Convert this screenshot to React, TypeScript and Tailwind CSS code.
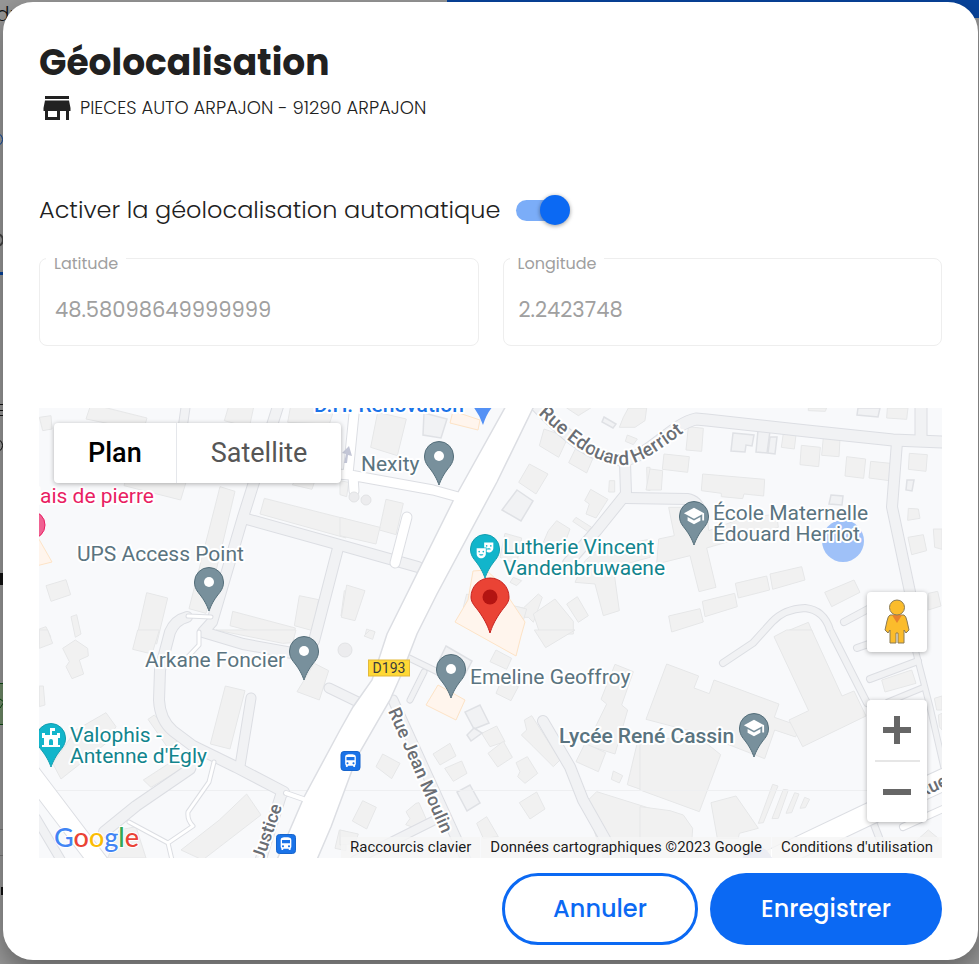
import { useState } from "react";
import type { ReactNode } from "react";
import { MdDirectionsBus, MdSchool, MdTheaterComedy } from "react-icons/md";

/* Buildings are stored per survey sheet, three units to one map pixel. */
const sheets = [
  {
    at: "translate(36 404) scale(0.33333)",
    buildings: [
      "10,40 45,35 48,75 20,80", "165,0 333,42 322,80 150,45", "580,0 655,0 640,70 565,50", "765,0 900,0 880,60 755,55",
      "270,225 450,235 434,288 264,245", "552,248 597,262 510,628 459,614", "685,283 930,345 930,402 672,330", "775,235 835,235 828,256 768,242",
      "30,545 90,527 104,572 45,592", "332,566 395,582 362,720 302,700", "790,575 848,587 830,680 775,665", "590,622 778,672 770,715 582,665",
      "105,638 122,632 135,690 118,700", "10,675 30,668 45,700 10,720", "925,560 940,565 930,640 915,636",
    ],
  },
  {
    at: "translate(340 404) scale(0.33333)",
    buildings: [
      "113,25 199,45 172,155 92,130", "0,230 26,235 20,278 0,272", "138,286 190,298 168,392 118,378", "0,340 120,370 108,420 0,395",
      "20,543 75,560 45,650 4,640", "612,75 684,100 656,160 598,125", "706,135 758,165 740,207 686,176", "568,180 624,210 588,270 536,235",
      "680,12 735,0 752,12 715,35", "865,12 920,12 915,50 885,70 838,70 850,40", "862,93 892,105 880,122 856,112", "808,230 824,230 824,264 806,264",
      "752,256 804,286 768,342 738,330 748,300 734,290", "708,340 755,370 742,382 698,352", "650,350 690,375 670,430 610,415 625,380", "495,388 545,402 530,480 480,460",
      "770,440 930,405 930,460 820,490 838,620 790,635 765,540 705,535 735,470", "520,520 545,530 530,545 510,535", "595,570 607,580 580,655 565,640 520,640 515,605 550,612", "645,585 700,652 700,690 600,690 580,630",
      "712,578 745,635 715,655 680,600", "380,570 395,575 385,610 370,610", "920,190 930,190 930,260 922,258", "80,675 105,685 95,700 75,695", "520,605 560,615 550,650 520,635",
    ],
  },
  {
    at: "translate(640 404) scale(0.33333)",
    buildings: [
      "145,68 190,73 185,142 138,138", "72,150 148,158 143,205 67,196", "30,195 68,200 64,258 18,258", "188,210 374,226 371,276 312,270 308,284 244,278 244,268 184,260",
      "430,88 468,93 463,135 424,130", "484,124 541,130 536,188 480,182", "550,100 600,106 597,158 545,154", "620,158 677,165 671,223 615,216",
      "692,172 752,178 748,230 687,222", "808,148 862,152 858,202 805,196", "742,12 804,12 800,46 740,42", "505,12 560,12 556,22 505,20",
      "805,313 835,315 840,343 803,349", "804,400 850,392 860,440 815,452", "880,375 906,375 906,436 884,430", "86,310 200,310 206,380 300,345 410,330 415,370 200,432 228,550 177,563 150,455 50,480 56,405 103,395",
      "390,510 485,488 495,528 398,556", "286,538 380,516 389,558 295,582", "187,592 284,568 292,608 195,638", "86,636 180,614 190,654 95,684",
      "554,565 642,528 660,565 575,608", "420,690 505,655 520,690", "865,568 893,562 903,606 865,618",
    ],
  },
  {
    at: "translate(36 630) scale(0.33333)",
    buildings: [
      "10,0 35,0 50,40 10,55", "80,55 118,30 155,55 157,78 130,90 143,132 108,146 90,110 100,95", "305,0 370,0 348,72 290,58", "568,168 627,182 582,357 523,342",
      "120,300 210,248 240,290 210,340 75,447 50,400", "336,268 355,255 425,330 400,360", "322,450 430,380 455,405 345,472", "550,570 632,492 675,555 500,690 435,660",
      "835,100 878,122 850,210 783,185", "10,168 22,168 27,225 10,230", "250,600 300,590 330,684 215,684", "910,600 930,605 930,662 897,655", "540,0 780,0 770,38 740,40",
    ],
  },
  {
    at: "translate(340 630) scale(0.33333)",
    buildings: [
      "90,0 105,5 98,28 72,18", "583,0 705,0 617,53", "468,60 515,85 500,118 450,95", "485,150 535,170 513,212 468,190",
      "825,103 880,125 845,225 863,240 825,372 740,345 800,222 783,208", "735,340 797,368 775,425 708,395", "470,288 495,335 450,350 425,310", "490,334 517,382 473,411 444,370",
      "330,340 348,378 300,405 279,372", "365,393 381,430 340,454 314,415", "128,372 180,400 155,446 108,410", "562,380 593,430 555,460 533,440 540,425 528,398",
      "590,486 615,537 570,567 538,518", "68,512 109,532 80,597 37,573", "228,520 237,518 262,575 240,600 197,584 210,566 198,545", "575,257 660,390 640,410 580,350 544,315 560,300 553,270",
      "440,560 475,620 430,625 410,580", "820,423 848,437 838,459 814,448", "895,325 930,340 930,488 862,464", "770,485 930,535 930,684 790,684 735,520", "0,600 55,612 45,640 0,645",
    ],
  },
  {
    at: "translate(640 630) scale(0.33333)",
    buildings: [
      "80,102 176,138 162,174 208,191 222,150 417,222 403,262 478,288 467,321 404,300 374,386 178,310 18,268", "402,20 440,0 515,0 606,198 642,183 678,258 488,350 447,270 506,242",
      "0,330 175,320 242,374 178,545 0,480", "0,530 90,542 130,555 158,595 155,640 0,640", "213,518 288,498 355,595 298,610 295,625 232,625",
      "398,463 414,468 370,578 355,580", "430,478 445,480 415,565 396,566", "464,488 477,492 455,548 438,550", "494,502 509,508 496,533 480,535",
      "725,150 815,120 828,160 735,186", "883,205 906,198 906,240 890,240", "895,255 906,250 906,300 898,290", "820,640 865,600 895,625 890,640",
    ],
  },
];

const outlined = [
  "424,413 447,419 441,438 423,435", "517,490 533,501 521,521 502,510", "604,417 616,424 613,428 602,422", "733,433 754,435 752,446 746,445 745,452 731,451",
  "758,430 770,431 767,453 756,452", "770,437 777,437 775,454 768,453", "831,495 843,496 842,505 829,504", "907,480 914,480 912,491 906,490",
  "858,408 880,408 878,417 857,415", "446,646 472,661 465,674 437,665", "480,705 489,723 474,729 465,712", "474,728 482,733 471,741 467,735", "470,785 480,803 467,811 457,792",
];

const shops = [
  "473,571 486,570 497,580 525,622 521,636 516,656 455,622 468,600", "438,685 465,700 456,720 426,705", "453,411 480,420 478,430 450,423", "36,534 52,562 36,566",
];

const lanes = [
  { d: "M535 404C558 428 590 460 625 460C650 455 672 424 696 419L707 420 807 431 893 440 945 442", w: 11 },
  { d: "M921 400V438", w: 11 },
  { d: "M625 462L626 494 597 530 568 563", w: 10 },
  { d: "M626 498L687 499Q698 501 700 512", w: 10 },
  { d: "M897 442L892 507 910 592", w: 10 },
  { d: "M914 645L930 707 944 768", w: 5 },
  { d: "M723 663L753 643 772 622Q784 609 805 608Q824 610 830 630L867 703", w: 6 },
  { d: "M844 622L870 608", w: 6 },
  { d: "M857 648L880 640", w: 6 },
  { d: "M870 679L918 661", w: 6 },
  { d: "M888 702L922 688", w: 5 },
  { d: "M873 822L882 845", w: 6 },
  { d: "M543 721L570 767 583 800 618 862", w: 10 },
  { d: "M393 700L468 864", w: 9 },
  { d: "M433 821L355 860", w: 8 },
  { d: "M407 657L442 674M424 672L410 700", w: 5 },
  { d: "M329 688L362 704", w: 9 },
  { d: "M187 617Q175 620 170 632L160 670 159 700Q160 720 173 731L193 746 236 767 284 792", w: 10 },
  { d: "M282 792L260 862", w: 10 },
  { d: "M193 760L190 769 136 806 104 832", w: 10 },
  { d: "M251 698L240 766", w: 9 },
  { d: "M280 400L243 517 212 622 203 632 243 644 292 653 314 641 338 548", w: 10 },
  { d: "M243 518L340 545 418 567", w: 10 },
  { d: "M186 404L183 425", w: 8 },
  { d: "M62 862L36 818", w: 8 },
];

const paths = [
  { d: "M355 404L348 474M326 473L350 475 433 490 462 498M353 476L354 491", w: 9 },
  { d: "M407 517L395 563", w: 9 },
  { d: "M188 616L211 617", w: 3 },
  { d: "M286 793L306 800", w: 4 },
  { d: "M214 762L209 782 188 812Q187 820 193 826L168 843 129 822M168 843L172 860", w: 3 },
  { d: "M199 632L199 645 183 662", w: 3 },
  { d: "M764 864L867 815 945 779", w: 21 },
  { d: "M903 827L945 808", w: 6 },
  { d: "M24 764L106 872", w: 18 },
];

type PinProps = { x: number; y: number; fill?: string; edge?: string; children?: ReactNode };

function Pin({ x, y, fill = "#78909c", edge = "#546e7a", children }: PinProps) {
  return (
    <g transform={`translate(${x} ${y})`}>
      <path
        d="M0 0C-1.500-4-3-8-8-15-12-20-14.500-23-14.500-29A14.500 14.500 0 0 1 14.500-29C14.500-23 12-20 8-15 3-8 1.500-4 0 0Z"
        fill={fill}
        stroke={edge}
      />
      {children ?? <circle cy="-29" r="5" fill="#fff" />}
    </g>
  );
}

function BusStop({ x, y }: { x: number; y: number }) {
  return (
    <g transform={`translate(${x} ${y})`}>
      <rect x="-9.500" y="-9.500" width="19" height="19" rx="3" fill="#1a73e8" stroke="#1765cc" />
      <MdDirectionsBus x={-8} y={-8} size={16} color="#fff" />
    </g>
  );
}

function CityMap() {
  return (
    <svg
      viewBox="39 408 903 450"
      preserveAspectRatio="xMidYMid slice"
      role="img"
      aria-label="Carte"
      className="block h-full w-full bg-[#f8f9fb] font-[Roboto,sans-serif]"
    >
      <defs>
        <path id="herriot" d="M538 414C563 436 590 463 622 465C642 465 664 447 700 420" />
        <path id="moulin" d="M388 711L448 848" />
      </defs>

      <g fill="#f1f1f1" stroke="#e6e7e8" strokeWidth="3">
        {sheets.map((s) => (
          <g key={s.at} transform={s.at}>
            {s.buildings.map((b) => <polygon key={b} points={b} />)}
          </g>
        ))}
      </g>
      <g fill="#f1f2f4" stroke="#dfe1e5" strokeWidth="1.500">
        {outlined.map((b) => <polygon key={b} points={b} />)}
      </g>
      <g fill="#fff5ed" stroke="#fde3c6">
        {shops.map((b) => <polygon key={b} points={b} />)}
      </g>
      <path d="M39 790.500H942" stroke="#eeeff1" />

      <g fill="none" stroke="#dcdee3" strokeLinecap="round" strokeLinejoin="round">
        {lanes.map((l) => <path key={l.d} d={l.d} strokeWidth={l.w + 2} />)}
      </g>
      <g fill="none" stroke="#f1f2f4" strokeLinecap="round" strokeLinejoin="round">
        {lanes.map((l) => <path key={l.d} d={l.d} strokeWidth={l.w} />)}
      </g>
      <g fill="none" stroke="#dcdee3" strokeLinecap="round" strokeLinejoin="round">
        {paths.map((l) => <path key={l.d} d={l.d} strokeWidth={l.w + 2} />)}
      </g>
      <path
        d="M507 404L453 501 387 634 372 680 353 707 340 730 304 797 276 862H316L331 827 357 757 390 700 402 673 417 634 437 594 497 482 535 404Z"
        fill="#fff"
        stroke="#dcdee3"
        strokeWidth="1.500"
      />
      <g fill="none" stroke="#fff" strokeLinecap="round" strokeLinejoin="round">
        {paths.map((l) => <path key={l.d} d={l.d} strokeWidth={l.w} />)}
      </g>
      <g fill="#ececee" stroke="#e2e3e5">
        <circle cx="354" cy="497" r="5" />
        <circle cx="366" cy="500" r="5" />
        <circle cx="345" cy="650" r="7" />
      </g>
      <path d="M344 463L346 454 342 453 349 446 352 456 348 455 347 463Z" fill="#c3c6d6" />

      <circle cx="843" cy="541" r="21" fill="#9fc1f8" />
      <circle cx="757" cy="862" r="15" fill="#c5cae9" />

      <path d="M471 404H495Q487 412 483 425Q479 413 471 404Z" fill="#5491f5" />
      <circle cx="31" cy="525" r="14" fill="#f06292" stroke="#e91e63" />
      <Pin x={439} y={485} />
      <Pin x={209} y={611} />
      <Pin x={304} y={680} />
      <Pin x={451} y={698} />
      <Pin x={694} y={545}>
        <MdSchool x={-11} y={-40} size={22} color="#fff" />
      </Pin>
      <Pin x={754} y={757}>
        <MdSchool x={-11} y={-40} size={22} color="#fff" />
      </Pin>
      <Pin x={485} y={578} fill="#12b5cb" edge="#129eaf">
        <MdTheaterComedy x={-10} y={-38} size={20} color="#fff" />
      </Pin>
      <Pin x={51} y={767} fill="#12b5cb" edge="#129eaf">
        <path
          d="M-9-20V-22H-7V-29H-9V-34H-6V-32H-1V-39H4V-36H1V-32H6V-34H9V-29H7V-22H9V-20ZM-2-22H2V-26A2 2 0 0 0-2-26Z"
          fill="#fff"
          fillRule="evenodd"
        />
      </Pin>
      <BusStop x={350.5} y={761} />
      <BusStop x={286} y={844} />

      <rect x="368.500" y="660" width="41" height="16" fill="#ffd835" stroke="#e3b93b" />
      <text x="389" y="673" textAnchor="middle" fontSize="14" fill="#3c3c3c">D193</text>

      <g fontSize="21" strokeWidth="4" stroke="#fff" strokeLinejoin="round" paintOrder="stroke" fill="#5a7480">
        <text x="361" y="471">Nexity</text>
        <text x="77" y="561">UPS Access Point</text>
        <text x="145" y="667">Arkane Foncier</text>
        <text x="470" y="684">Emeline Geoffroy</text>
        <text x="713" y="520">École Maternelle</text>
        <text x="713" y="541">Édouard Herriot</text>
        <text x="559" y="743" fontWeight="500">Lycée René Cassin</text>
        <g fill="#12858e">
          <text x="503" y="554">Lutherie Vincent</text>
          <text x="503" y="575">Vandenbruwaene</text>
          <text x="70" y="742">Valophis -</text>
          <text x="70" y="763">Antenne d'Égly</text>
        </g>
        <text x="154" y="503" textAnchor="end" fill="#e91e63">Relais de pierre</text>
        <text x="314" y="412" fontWeight="500" fill="#1a73e8">D.H. Rénovation</text>
      </g>
      <g fontSize="18" fontWeight="500" strokeWidth="4" stroke="#fff" strokeLinejoin="round" paintOrder="stroke" fill="#6a6e74">
        <text fontSize="19"><textPath href="#herriot">Rue Edouard Herriot</textPath></text>
        <text><textPath href="#moulin">Rue Jean Moulin</textPath></text>
        <text transform="translate(263 862) rotate(-71)">Justice</text>
        <text transform="translate(921 798) rotate(-25)">Rue</text>
      </g>

      <g transform="translate(490 633)">
        <path
          d="M0 0C-2-6-4-11-10-20-15-27-19-30-19-36A19 19 0 0 1 19-36C19-30 15-27 10-20 4-11 2-6 0 0Z"
          fill="#ea4335"
          stroke="#c5221f"
        />
        <circle cy="-36" r="7.500" fill="#b31412" />
      </g>
    </svg>
  );
}

function Pegman() {
  return (
    <svg viewBox="0 0 28 46" className="h-[46px] w-7" aria-hidden="true">
      <path d="M7 16H21Q23 17 24 22L26 31 23 34 21 31V44H15V34H13V44H7V31L5 34 2 31 4 22Q5 17 7 16Z" fill="#fbbc2c" stroke="#8a7a55" />
      <path d="M9 16H19L14 24Z" fill="#e8812e" />
      <circle cx="14" cy="8.500" r="7.500" fill="#fbbc2c" stroke="#8a7a55" />
    </svg>
  );
}

function MapPanel() {
  const [type, setType] = useState("Plan");
  return (
    <div className="relative h-[450px] overflow-hidden font-[Roboto,sans-serif]">
      <CityMap />

      <div className="absolute inset-0 flex flex-col justify-between">
        <div className="flex items-start p-[15px]">
          <div className="flex h-[60px] rounded-sm bg-white text-[27px] shadow-[0_1px_5px_rgba(0,0,0,0.3)]">
            {["Plan", "Satellite"].map((name) => (
              <button
                key={name}
                type="button"
                aria-pressed={type === name}
                onClick={() => setType(name)}
                className="border-l border-gray-200 px-[34px] text-[#565656] first:border-l-0 aria-pressed:font-medium aria-pressed:text-black"
              >
                {name}
              </button>
            ))}
          </div>
        </div>

        <div>
          <div className="flex items-end justify-between px-[15px]">
            <a
              href="#google"
              aria-label="Google"
              className="translate-y-4 font-[Lato,sans-serif] text-[27px] leading-8 font-medium [paint-order:stroke] [-webkit-text-stroke:2px_white]"
            >
              <span className="text-[#4285f4]">G</span>
              <span className="text-[#ea4335]">o</span>
              <span className="text-[#fbbc04]">o</span>
              <span className="text-[#4285f4]">g</span>
              <span className="text-[#34a853]">l</span>
              <span className="text-[#ea4335]">e</span>
            </a>

            <div className="mb-[15px] flex w-[60px] flex-col gap-12">
              <button
                type="button"
                aria-label="Street View"
                className="flex h-[60px] items-center justify-center rounded-sm bg-white shadow-[0_1px_5px_rgba(0,0,0,0.3)]"
              >
                <Pegman />
              </button>

              <div className="flex flex-col items-center rounded-sm bg-white shadow-[0_1px_5px_rgba(0,0,0,0.3)]">
                <button type="button" aria-label="Zoom avant" className="flex h-[60px] w-full items-center justify-center">
                  <svg viewBox="0 0 28 28" className="size-7" aria-hidden="true">
                    <path d="M14 0V28M0 14H28" stroke="#666" strokeWidth="6" />
                  </svg>
                </button>
                <div className="h-[2px] w-[45px] bg-[#e6e6e6]" />
                <button type="button" aria-label="Zoom arrière" className="flex h-[60px] w-full items-center justify-center">
                  <svg viewBox="0 0 28 28" className="size-7" aria-hidden="true">
                    <path d="M0 14H28" stroke="#666" strokeWidth="6" />
                  </svg>
                </button>
              </div>
            </div>
          </div>

          <div className="flex justify-end gap-px text-[15px] leading-[21px] text-black/90">
            <button type="button" className="bg-[#f5f5f5]/80 px-[9px]">Raccourcis clavier</button>
            <span className="bg-[#f5f5f5]/80 px-[9px]">Données cartographiques ©2023 Google</span>
            <a href="#conditions" className="bg-[#f5f5f5]/80 px-[9px]">Conditions d'utilisation</a>
          </div>
        </div>
      </div>
    </div>
  );
}

function CoordinateField({ id, label, value }: { id: string; label: string; value: string }) {
  return (
    <div className="relative">
      <label htmlFor={id} className="absolute -top-1 left-[7px] bg-white px-2 text-[16px] leading-5 text-[#a0a0a0]">
        {label}
      </label>
      <input
        id={id}
        value={value}
        disabled
        className="h-[88px] w-full rounded-lg border border-[#eeeeee] bg-white px-[15px] pt-[15px] text-[21px] text-[#a0a0a0]"
      />
    </div>
  );
}

/* The dimmed page that stays visible round the dialog. */
function Backdrop() {
  return (
    <div aria-hidden="true" className="absolute inset-0 overflow-hidden bg-[#979797]">
      <div className="flex">
        <span className="-ml-1 w-[451px] text-[20px] leading-7 font-light text-[#111]">du</span>
        <div className="h-[18px] grow bg-[#07439c]" />
      </div>
      <svg viewBox="0 28 4 936" className="h-[936px] w-1" fill="none" stroke="#111">
        <circle cx="-4" cy="139.500" r="6.500" stroke="#07439c" />
        <circle cx="-3" cy="240" r="6" stroke="#444" strokeWidth="2" />
        <path d="M0 273.500H4" stroke="#07439c" strokeWidth="3" />
        <path d="M0 404.500H4M0 410.500H4M0 415.500H4" />
        <circle cx="-4" cy="445.500" r="6.500" />
        <path d="M1.500 573V585" strokeWidth="3" />
        <path d="M-2 683.500H6V724.500H-2Z" fill="#6f8a68" stroke="#0d4a12" />
        <path d="M0 699L4 702 0 708" stroke="#0d4a12" />
        <path d="M0 829.500H4M0 855.500H4" stroke="#777" />
        <path d="M2 887V895" strokeWidth="2" />
      </svg>
    </div>
  );
}

export default function App() {
  const [auto, setAuto] = useState(true);
  return (
    <div className="relative min-h-screen pt-[2px] pr-px pb-1 pl-[3px] font-[Poppins,Inter,sans-serif] text-[#212121]">
      <Backdrop />
      <main
        role="dialog"
        aria-labelledby="title"
        className="relative rounded-[30px] bg-white px-9 pt-[37px] pb-[15px] shadow-[0_10px_24px_rgba(0,0,0,0.35)]"
      >
        <h1 id="title" className="text-[36px] leading-[48px] font-bold">Géolocalisation</h1>
        <div className="mt-[3px] flex items-center gap-[5px]">
          <svg viewBox="0 0 24 24" className="size-9" fill="currentColor" aria-hidden="true">
            <path d="M20 4H4v2h16V4zm1 10v-2l-1-5H4l-1 5v2h1v6h10v-6h4v6h2v-6h1zm-9 4H6v-4h6v4z" />
          </svg>
          <span className="text-[18px] leading-[34px] font-light">PIECES AUTO ARPAJON - 91290 ARPAJON</span>
        </div>

        <label className="mt-[69px] flex items-center gap-4">
          <span className="text-[24px] leading-[30px] font-light">Activer la géolocalisation automatique</span>
          <span className="relative flex h-[30px] w-[54px] items-center">
            <input
              type="checkbox"
              role="switch"
              checked={auto}
              onChange={(e) => setAuto(e.target.checked)}
              className="peer h-[21px] w-[50px] cursor-pointer appearance-none rounded-full bg-gray-300 checked:bg-[#7badf8]"
            />
            <span className="pointer-events-none absolute left-0 size-[30px] rounded-full bg-white shadow-[0_1px_4px_rgba(0,0,0,0.4)] peer-checked:left-6 peer-checked:bg-[#0b69f3]" />
          </span>
        </label>

        <div className="mt-[33px] mb-[62px] grid grid-cols-2 gap-6">
          <CoordinateField id="lat" label="Latitude" value="48.58098649999999" />
          <CoordinateField id="lng" label="Longitude" value="2.2423748" />
        </div>

        <MapPanel />

        <div className="mt-[15px] flex justify-end gap-3 text-[24px] font-medium">
          <button type="button" className="h-[72px] w-[196px] rounded-full border-[3px] border-[#0b69f3] bg-white text-[#0b69f3]">
            Annuler
          </button>
          <button type="button" className="h-[72px] w-[232px] rounded-full bg-[#0b69f3] text-white">
            Enregistrer
          </button>
        </div>
      </main>
    </div>
  );
}
